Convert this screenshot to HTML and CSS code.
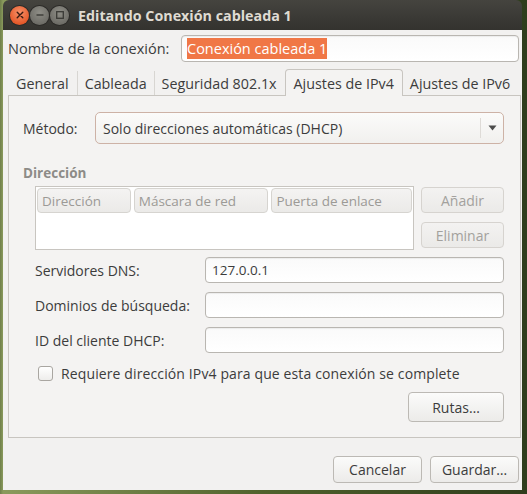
FILE: index.html
```html
<!DOCTYPE html>
<html lang="es">
<head>
<meta charset="utf-8">
<title>Editando Conexión cableada 1</title>
<link rel="stylesheet" href="styles.css">
</head>
<body>
<div class="desktop">
  <div class="window">
    <div class="titlebar">
      <span class="wbtn close"><svg width="18" height="18" viewBox="0 0 18 18"><path d="M6.2 6.2 L11.8 11.8 M11.8 6.2 L6.2 11.8" stroke="#3a1a10" stroke-width="1.4" stroke-linecap="round"/></svg></span>
      <span class="wbtn grey"><svg width="18" height="18" viewBox="0 0 18 18"><path d="M5.5 9 H12.5" stroke="#3a3a36" stroke-width="1.4"/></svg></span>
      <span class="wbtn grey"><svg width="18" height="18" viewBox="0 0 18 18"><rect x="5.7" y="5.7" width="6.6" height="6.6" fill="none" stroke="#3a3a36" stroke-width="1.3"/></svg></span>
      <span class="title">Editando Conexión cableada 1</span>
    </div>
    <div class="content">
      <div class="name-row">
        <span class="name-label">Nombre de la conexión:</span>
        <div class="entry name-entry"><span class="sel">Conexión cableada 1</span></div>
      </div>
      <div class="notebook">
        <div class="tabs">
          <span class="tab t1">General</span>
          <span class="tab t2">Cableada</span>
          <span class="tab t3">Seguridad 802.1x</span>
          <span class="tab active">Ajustes de IPv4</span>
          <span class="tab t5">Ajustes de IPv6</span>
        </div>
        <div class="panel">
          <div class="method-row">
            <span class="method-label">Método:</span>
            <div class="combo">
              <span class="combo-text">Solo direcciones automáticas (DHCP)</span>
              <span class="combo-arrow"><svg width="9" height="6" viewBox="0 0 9 6"><path d="M0.5 0.5 H8.5 L4.5 5.5 Z" fill="#4c4c4c"/></svg></span>
            </div>
          </div>
          <div class="section-label">Dirección</div>
          <div class="addr-row">
            <div class="addr-table">
              <div class="addr-head">
                <span class="hcell h1">Dirección</span>
                <span class="hcell h2">Máscara de red</span>
                <span class="hcell h3">Puerta de enlace</span>
              </div>
            </div>
            <div class="addr-buttons">
              <span class="btn disabled">Añadir</span>
              <span class="btn disabled">Eliminar</span>
            </div>
          </div>
          <div class="form-grid">
            <span class="flabel">Servidores DNS:</span>
            <div class="entry">127.0.0.1</div>
            <span class="flabel">Dominios de búsqueda:</span>
            <div class="entry"></div>
            <span class="flabel">ID del cliente DHCP:</span>
            <div class="entry"></div>
          </div>
          <div class="check-row">
            <span class="checkbox"></span>
            <span class="check-text">Requiere dirección IPv4 para que esta conexión se complete</span>
          </div>
          <div class="routes-row">
            <span class="btn routes">Rutas…</span>
          </div>
        </div>
      </div>
      <div class="action-row">
        <span class="btn cancel">Cancelar</span>
        <span class="btn save">Guardar…</span>
      </div>
    </div>
  </div>
</div>
</body>
</html>
```

FILE: styles.css
```css
* { box-sizing: border-box; }
html, body { margin: 0; padding: 0; }
body {
  width: 527px;
  height: 494px;
  overflow: hidden;
  font-family: "Open Sans", "DejaVu Sans", sans-serif;
  font-size: 13.5px;
  color: #3c3c3c;
  background: linear-gradient(90deg, #6f7f4a 0, #8a9a5c 3px, #50622c 50%, #2f3d1c 100%);
}
.desktop {
  padding: 0 5px 4px 3px;
  height: 494px;
}
.window {
  width: 519px;
  height: 490px;
  display: flex;
  flex-direction: column;
}
.titlebar {
  height: 30px;
  flex: none;
  display: flex;
  align-items: center;
  padding-left: 7px;
  gap: 1px;
  border-radius: 6px 6px 0 0;
  background: linear-gradient(#45443f, #3a3935 60%, #34332f);
}
.wbtn {
  width: 19px;
  height: 19px;
  border-radius: 50%;
  display: flex;
  align-items: center;
  justify-content: center;
}
.wbtn.close {
  background: radial-gradient(circle at 50% 35%, #f7926a, #e55a2b 70%, #c84a20);
  box-shadow: 0 0 0 1px #2b2a27;
}
.wbtn.grey {
  background: radial-gradient(circle at 50% 35%, #8e8d86, #6f6e68 70%, #5e5d58);
  box-shadow: 0 0 0 1px #2b2a27;
}
.title {
  margin-left: 8px;
  color: #dfdbd2;
  font-weight: bold;
  font-size: 14.3px;
}
.content {
  flex: 1;
  background: #f2f1f0;
  padding: 5px 2px 0 5px;
  display: flex;
  flex-direction: column;
}
.name-row {
  display: flex;
  align-items: center;
  height: 27px;
}
.name-label {
  width: 173px;
  flex: none;
  font-size: 14.5px;
}
.entry {
  height: 26px;
  border: 1px solid #b9b6b1;
  border-radius: 4px;
  background: linear-gradient(#fafafa, #ffffff);
  box-shadow: inset 0 1px 1px rgba(0,0,0,0.06);
  display: flex;
  align-items: center;
  padding-left: 6px;
  font-size: 13.5px;
  color: #3c3c3c;
}
.name-entry {
  flex: 1;
  height: 27px;
  margin-right: 1px;
  padding-left: 5px;
  font-size: 14.5px;
}
.sel {
  background: #f07746;
  color: #ffffff;
  padding: 1px 0;
  line-height: 19px;
}
.notebook {
  margin-top: 7px;
}
.tabs {
  display: flex;
  align-items: flex-end;
  height: 26px;
  white-space: nowrap;
}
.tab {
  flex: none;
  height: 24px;
  display: flex;
  align-items: center;
  font-size: 14.3px;
  color: #3c3c3c;
  position: relative;
  white-space: nowrap;
}
.t1 { padding: 0 8px 0 8px; border-right: 1px solid #d8d6d2; }
.t2 { padding: 0 7px 0 7px; border-right: 1px solid #d8d6d2; }
.t3 { padding: 0 7px 0 7px; }
.tab.active {
  height: 27px;
  margin-left: 1px;
  padding: 0 8px;
  background: #f4f3f2;
  border: 1px solid #c8c5c0;
  border-bottom: none;
  border-radius: 4px 4px 0 0;
  margin-bottom: -1px;
  z-index: 1;
}
.t5 { padding: 0 0 0 7px; }
.panel {
  height: 343px;
  border: 1px solid #c8c5c0;
  background: #f4f3f2;
  margin-right: -1px;
  padding: 16px 16px 0 14px;
  display: flex;
  flex-direction: column;
}
.method-row {
  display: flex;
  align-items: center;
  height: 32px;
}
.method-label {
  width: 72px;
  flex: none;
  font-size: 14px;
}
.combo {
  flex: 1;
  height: 32px;
  border: 1px solid #cdb2a6;
  border-radius: 5px;
  background: linear-gradient(#fbfbfa, #f1f0ee);
  display: flex;
  align-items: center;
  padding-left: 7px;
}
.combo-text {
  flex: 1;
  font-size: 14px;
}
.combo-arrow {
  width: 23px;
  height: 20px;
  border-left: 1px solid #dedbd7;
  display: flex;
  align-items: center;
  justify-content: center;
}
.section-label {
  margin-top: 20px;
  height: 18px;
  line-height: 18px;
  font-weight: bold;
  color: #8d8b87;
  font-size: 13.5px;
}
.addr-row {
  display: flex;
  margin-top: 4px;
  padding-left: 12px;
  gap: 7px;
}
.addr-table {
  width: 379px;
  height: 64px;
  border: 1px solid #c8c5c0;
  background: #ffffff;
  padding: 1px;
}
.addr-head {
  display: flex;
  gap: 3px;
  height: 25px;
}
.hcell {
  border: 1px solid #d6d4d0;
  border-radius: 4px;
  background: linear-gradient(#f4f3f2, #ebeae8);
  color: #9c9a96;
  font-size: 13.5px;
  display: flex;
  align-items: center;
  padding-left: 4px;
}
.h1 { width: 94px; }
.h2 { width: 135px; }
.h3 { width: 141px; }
.addr-buttons {
  display: flex;
  flex-direction: column;
  gap: 9px;
  margin-top: 1px;
}
.btn {
  display: flex;
  align-items: center;
  justify-content: center;
  height: 27px;
  border: 1px solid #bcb9b4;
  border-radius: 4px;
  background: linear-gradient(#fbfbfa, #ecebe9);
  font-size: 14px;
  color: #3c3c3c;
}
.btn.disabled {
  width: 83px;
  height: 26px;
  color: #a3a19d;
  border-color: #d6d3cf;
  background: linear-gradient(#f3f2f1, #ebeae8);
}
.form-grid {
  display: grid;
  grid-template-columns: 170px 299px;
  row-gap: 9px;
  align-items: center;
  margin-top: 7px;
  padding-left: 12px;
}
.flabel {
  font-size: 14px;
  color: #3c3c3c;
}
.check-row {
  display: flex;
  align-items: center;
  margin-top: 12px;
  padding-left: 15px;
  height: 16px;
}
.checkbox {
  width: 15px;
  height: 15px;
  border: 1px solid #a9a6a1;
  border-radius: 3px;
  background: linear-gradient(#ffffff, #eeedeb);
}
.check-text {
  margin-left: 8px;
  font-size: 14px;
  letter-spacing: 0.12px;
}
.routes-row {
  display: flex;
  justify-content: flex-end;
  margin-top: 11px;
}
.btn.routes {
  width: 96px;
  height: 30px;
}
.action-row {
  display: flex;
  justify-content: flex-end;
  gap: 8px;
  margin-top: 18px;
  margin-right: 1px;
}
.btn.cancel { width: 89px; }
.btn.save { width: 89px; }
```
